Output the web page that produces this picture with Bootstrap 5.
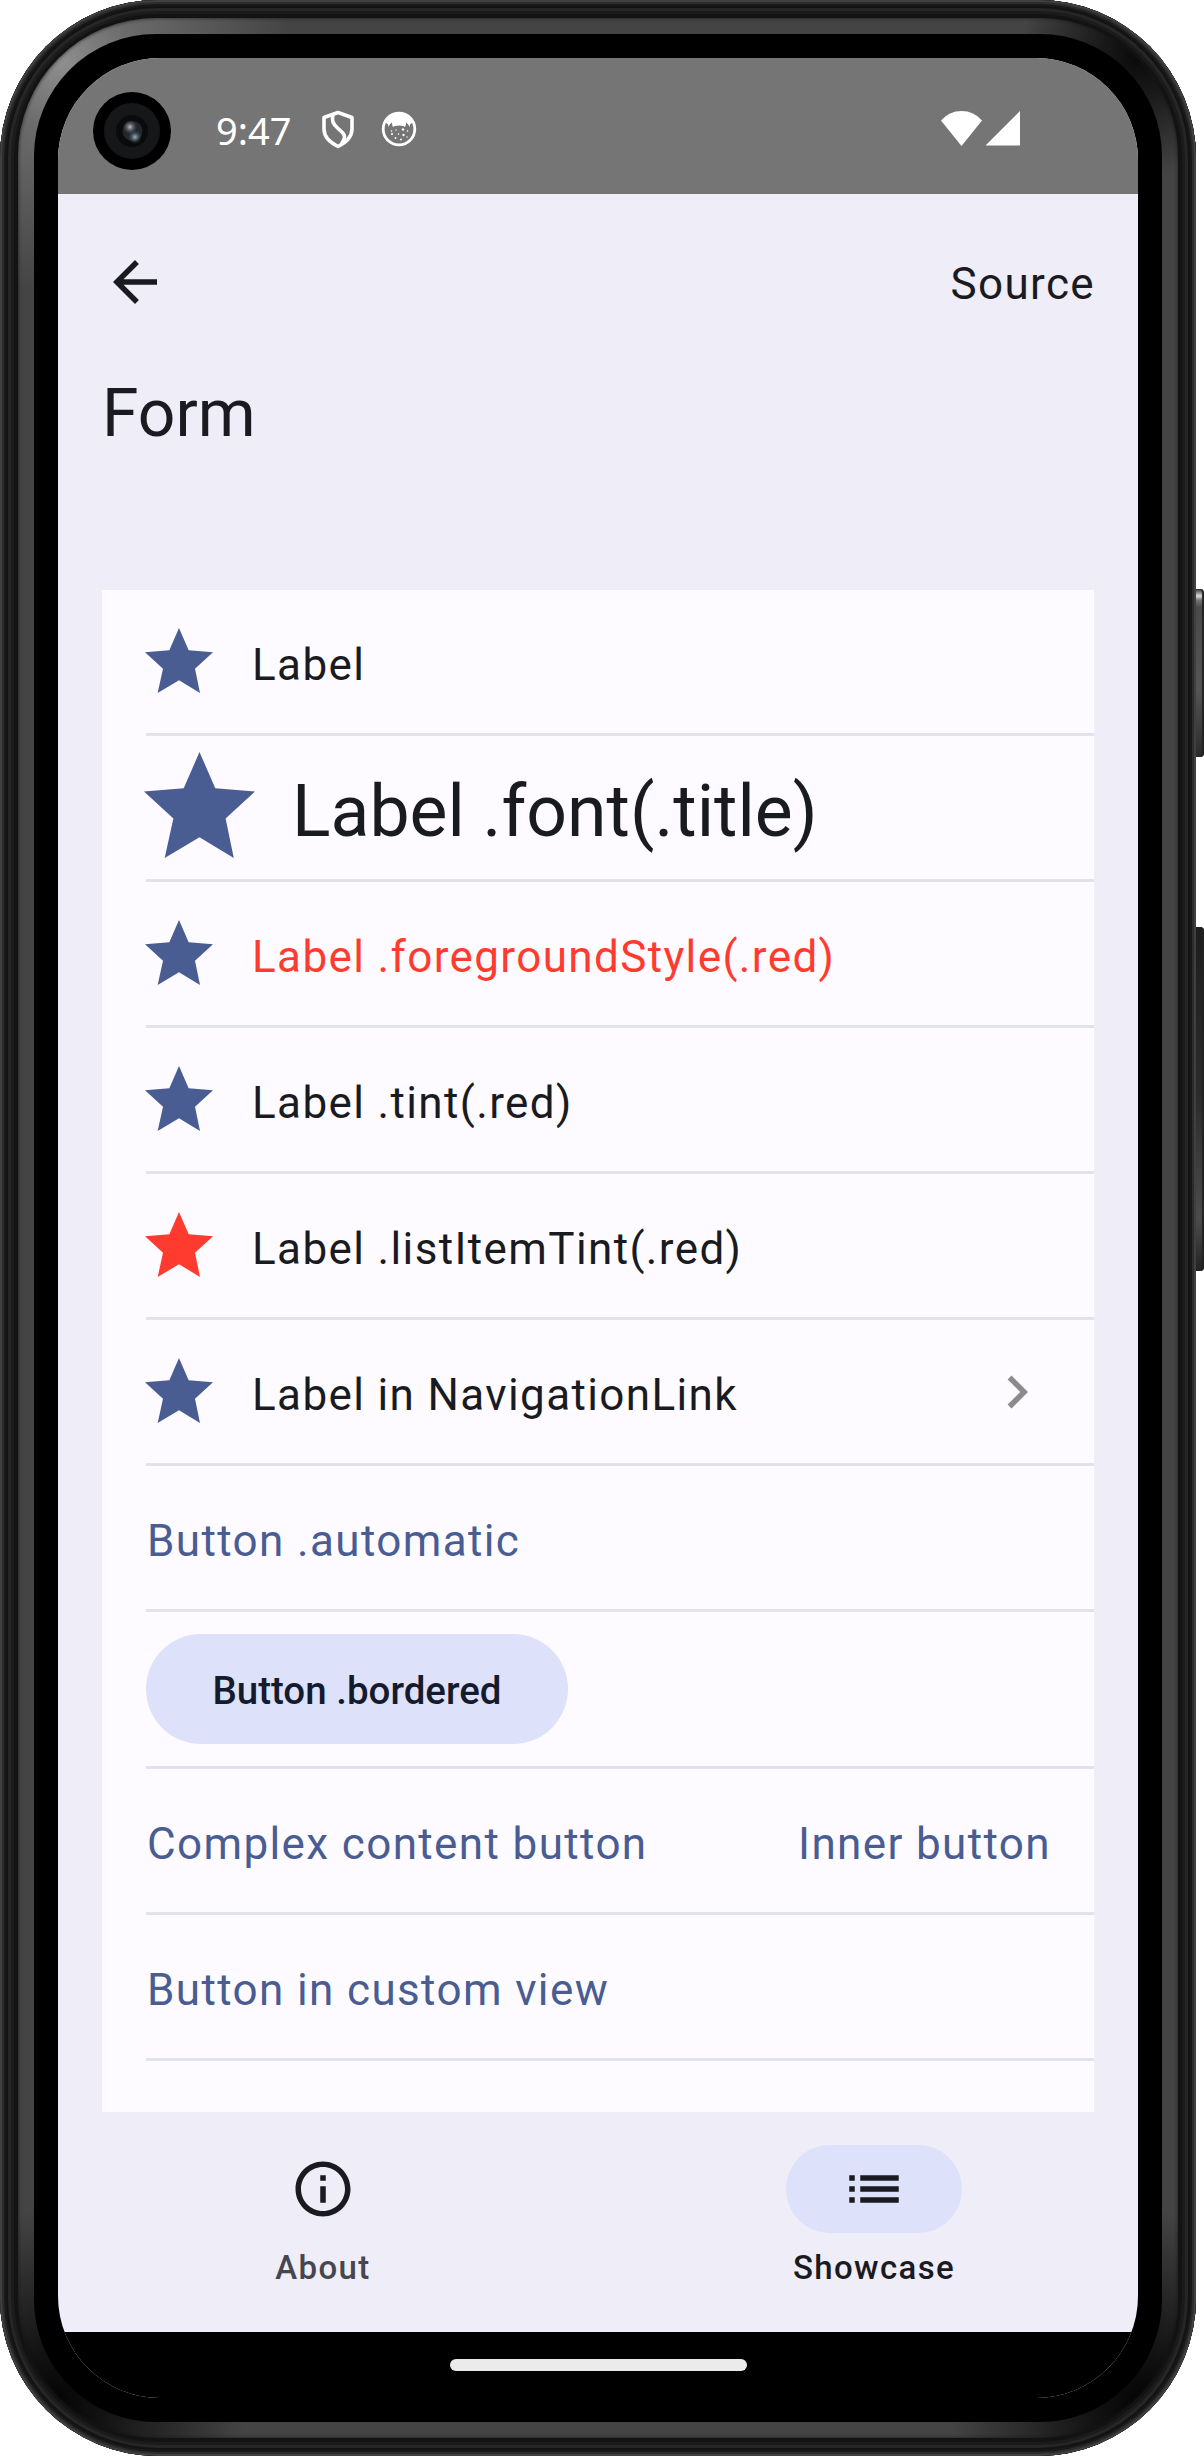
<!DOCTYPE html>
<html lang="en">
<head>
<meta charset="utf-8">
<meta name="viewport" content="width=device-width, initial-scale=1">
<title>Form</title>
<link href="https://cdn.jsdelivr.net/npm/bootstrap@5.3.0/dist/css/bootstrap.min.css" rel="stylesheet">
<style>
  body { font-family: Roboto, "Noto Sans", sans-serif; font-size: 44px; line-height: 66px; letter-spacing: 1.375px; color: #1a1b21; background: #fff; }
  svg { display: block; flex: none; }
  .stage { width: 1204px; height: 2456px; overflow: hidden; }
  /* phone shell, from the outside in */
  .shell { width: 1196px; height: 2456px; padding: 18px; border-radius: 158px; background: #131313;
    box-shadow: inset 0 0 0 2px #404040, inset 0 0 0 4px #2c2c2c, inset 0 0 0 6px #191919, inset 0 0 0 8px #131313, inset 0 0 0 11px #262626, inset 0 0 0 14px #1b1b1b; }
  .rim { padding: 16px; border-radius: 138px;
    background:
      radial-gradient(circle at 45px 45px, #8e8e8e 0, rgba(120,120,120,.75) 70px, rgba(80,80,80,0) 230px),
      radial-gradient(circle at calc(100% - 38px) 38px, #0a0a0a 0, rgba(15,15,15,.8) 40px, rgba(40,40,40,0) 120px),
      radial-gradient(circle at 38px calc(100% - 38px), #050505 0, rgba(10,10,10,.85) 50px, rgba(40,40,40,0) 190px),
      radial-gradient(circle at calc(100% - 38px) calc(100% - 38px), #050505 0, rgba(10,10,10,.85) 50px, rgba(40,40,40,0) 190px),
      #444;
    box-shadow: inset 0 0 3px 1px rgba(20,20,20,.5); }
  .bezel { padding: 24px; border-radius: 122px; background: #000; }
  .display-area { width: 1080px; height: 2340px; border-radius: 102px; background: #efedf7; }
  .side-key { left: 1196px; width: 8px; border-radius: 0 4px 4px 0; }
  .key-power { top: 589px; height: 168px; background: linear-gradient(#333 0, #ddd 7px, #777 11px, #4a4a4a 18px, #555 60%, #2a2a2a); box-shadow: inset -2px 0 1px #222; }
  .key-volume { top: 927px; height: 344px; background: linear-gradient(#1e1e1e, #2b2c2d 50%, #4c4c4c 85%, #222); box-shadow: inset -2px 0 1px #222; }
  .status-strip { height: 136px; background: #757575; color: #fff; padding: 5px 117px 0 35px; }
  .camera { margin-top: 5px; }
  .clock { font-family: "Noto Sans", sans-serif; font-size: 38px; line-height: 52px; letter-spacing: 0; margin: 2px 30px 0 45px; }
  .shield { margin: 1px 26px 0 0; }
  .toolbar { height: 176px; padding: 4px 43px 0 44px; }
  .toolbar svg { margin-top: -4px; }
  .heading { font-size: 66px; line-height: 88px; letter-spacing: 0; margin: 0 44px; height: 220px; }
  .form-list { margin: 0 44px; height: 1522px; background: #fdfbff; --bs-list-group-bg: transparent; border-radius: 0; }
  .form-row { margin-left: 44px; height: 146px; padding: 0 44px 0 0; border: 0; border-bottom: 3px solid #e1e2ec; border-radius: 0; background: transparent; color: inherit; }
  .form-row > .txt { padding: 6px 0 0 1px; margin-right: -1px; white-space: nowrap; }
  .star { width: 68px; height: 65px; margin: 0 38px 3px -1px; fill: #495d92; }
  .row-title { font-size: 71.5px; letter-spacing: 0; }
  .row-title > .txt { padding-top: 9px; }
  .row-title .star { width: 111px; height: 106px; margin: 0 36px 5px -2px; }
  .txt-red { color: #ff3b30; }
  .star-red { fill: #ff3b30; }
  .txt-tint { color: #495d92; }
  .row-tall { height: 157px; }
  .btn-tonal { width: 422px; height: 110px; padding: 2px 0 0; border: 0; font-size: 38.5px; line-height: 55px; font-weight: 500; letter-spacing: 0; background: #dde1f9; color: #151b2c; }
  .tab-strip { height: 220px; gap: 22px; padding-top: 33px; font-size: 33px; line-height: 44px; font-weight: 500; color: #45464f; }
  .tab-pill { width: 176px; height: 88px; color: #1a1b21; }
  .tab-item.active { color: #1a1b21; }
  .tab-item.active .tab-pill { background: #dde1f9; }
  .tab-text { margin-top: 13px; padding-left: 1px; }
  .gesture-strip { height: 66px; background: #000; }
  .handle { width: 297px; height: 12px; background: #ebebeb; }
</style>
<script src="https://cdn.jsdelivr.net/npm/bootstrap@5.3.0/dist/js/bootstrap.bundle.min.js"></script>
</head>
<body>
<svg width="0" height="0" class="position-absolute" aria-hidden="true">
  <symbol id="star" viewBox="195 805 204 193" preserveAspectRatio="none"><path d="M297 805L326 871L399 877L345 926L360 998L297 960L233 998L249 926L195 877L268 871Z"/></symbol>
</svg>
<div class="stage position-relative">
  <div class="shell">
    <div class="rim">
      <div class="bezel">
        <div class="display-area d-flex flex-column overflow-hidden">

          <div class="status-strip d-flex align-items-center">
            <svg class="camera" width="78" height="78" viewBox="0 0 78 78">
              <defs>
                <radialGradient id="g1"><stop offset="0" stop-color="#bcc0c6"/><stop offset="1" stop-color="#555960" stop-opacity="0"/></radialGradient>
                <radialGradient id="g2"><stop offset="0" stop-color="#9db4bd"/><stop offset="1" stop-color="#39464d" stop-opacity="0"/></radialGradient>
              </defs>
              <circle cx="39" cy="39" r="39" fill="#000"/><circle cx="39" cy="39" r="28" fill="#161718"/>
              <circle cx="39" cy="39" r="16" fill="#0a0b0d"/><circle cx="39.500" cy="39" r="10" fill="#22272d"/>
              <circle cx="37" cy="35" r="7" fill="url(#g1)"/><circle cx="42" cy="45" r="7" fill="url(#g2)"/>
            </svg>
            <div class="clock">9:47</div>
            <svg class="shield" width="34" height="40" viewBox="0 0 34 40" fill="none" stroke="#fff" stroke-width="3.600" stroke-linejoin="round">
              <path d="M17 3.500L31 8.500V20C31 28 25 33.500 17 37.500C9 33.500 3 28 3 20V8.500Z"/>
              <path d="M12 5.500C10.500 12 12 15 17 19.500C23.500 25 26 27 20.500 34.500"/>
            </svg>
            <svg width="36" height="36" viewBox="0 0 36 36">
              <circle cx="18" cy="18" r="15.800" fill="#757575" stroke="#fff" stroke-width="2.800"/>
              <path d="M4 11Q8 2.500 18 2.500T32 11L29 13.500L28.500 16Q27.500 12.500 25 11.500Q25 15.500 23.500 16Q23 14.500 18 14.500T12.500 16Q11 15.500 11 11.500Q8.500 12.500 7.500 16L7 13.500Z" fill="#fff"/>
              <g fill="#fff"><circle cx="10.500" cy="20" r=".8"/><circle cx="22" cy="18.500" r="1.200"/><circle cx="11" cy="23" r="1.100"/><circle cx="15" cy="19" r=".7"/><circle cx="17.500" cy="23" r=".8"/><circle cx="26.500" cy="20" r=".8"/><circle cx="22.500" cy="24" r="1.200"/><circle cx="14.500" cy="27" r=".9"/><circle cx="20" cy="28.500" r=".9"/><circle cx="26" cy="26" r=".7"/></g>
            </svg>
            <svg class="ms-auto" width="80" height="35" viewBox="0 0 80 35" fill="#fff"><path d="M0 9.500Q8 0 20.500 0T41 9.500L20.500 35Z"/><path d="M79 0V34.500H44.500Z"/></svg>
          </div>

          <nav class="toolbar d-flex align-items-center justify-content-between">
            <svg width="66" height="66" viewBox="0 0 24 24" fill="#1a1b21"><path d="M20 11H7.830l5.590-5.590L12 4l-8 8 8 8 1.410-1.410L7.830 13H20v-2z"/></svg>
            <span>Source</span>
          </nav>
          <h1 class="heading fw-normal">Form</h1>

          <div class="form-list list-group overflow-hidden flex-shrink-0">
            <div class="form-row list-group-item d-flex align-items-center flex-shrink-0"><svg class="star"><use href="#star"/></svg><span class="txt">Label</span></div>
            <div class="form-row row-title list-group-item d-flex align-items-center flex-shrink-0"><svg class="star"><use href="#star"/></svg><span class="txt">Label .font(.title)</span></div>
            <div class="form-row list-group-item d-flex align-items-center flex-shrink-0"><svg class="star"><use href="#star"/></svg><span class="txt txt-red">Label .foregroundStyle(.red)</span></div>
            <div class="form-row list-group-item d-flex align-items-center flex-shrink-0"><svg class="star"><use href="#star"/></svg><span class="txt">Label .tint(.red)</span></div>
            <div class="form-row list-group-item d-flex align-items-center flex-shrink-0"><svg class="star star-red"><use href="#star"/></svg><span class="txt">Label .listItemTint(.red)</span></div>
            <div class="form-row list-group-item d-flex align-items-center flex-shrink-0"><svg class="star"><use href="#star"/></svg><span class="txt">Label in NavigationLink</span>
              <svg class="ms-auto" width="66" height="66" viewBox="0 0 24 24" fill="#8b8b8c"><path d="M10 6L8.590 7.410 13.170 12l-4.580 4.590L10 18l6-6z"/></svg></div>
            <div class="form-row list-group-item d-flex align-items-center flex-shrink-0"><span class="txt txt-tint">Button .automatic</span></div>
            <div class="form-row row-tall list-group-item d-flex align-items-center flex-shrink-0"><button type="button" class="btn btn-tonal rounded-pill">Button .bordered</button></div>
            <div class="form-row list-group-item d-flex align-items-center justify-content-between flex-shrink-0"><span class="txt txt-tint">Complex content button</span><span class="txt txt-tint">Inner button</span></div>
            <div class="form-row list-group-item d-flex align-items-center flex-shrink-0"><span class="txt txt-tint">Button in custom view</span></div>
          </div>

          <div class="tab-strip d-flex">
            <div class="tab-item d-flex flex-column align-items-center flex-fill w-50">
              <div class="tab-pill rounded-pill d-flex align-items-center justify-content-center">
                <svg width="66" height="66" viewBox="0 0 24 24" fill="currentColor"><path d="M11 7h2v2h-2zm0 4h2v6h-2zm1-9C6.480 2 2 6.480 2 12s4.480 10 10 10 10-4.480 10-10S17.520 2 12 2zm0 18c-4.410 0-8-3.590-8-8s3.590-8 8-8 8 3.590 8 8-3.590 8-8 8z"/></svg>
              </div>
              <div class="tab-text">About</div>
            </div>
            <div class="tab-item active d-flex flex-column align-items-center flex-fill w-50">
              <div class="tab-pill rounded-pill d-flex align-items-center justify-content-center">
                <svg width="66" height="66" viewBox="0 0 24 24" fill="currentColor"><path d="M3 13h2v-2H3v2zm0 4h2v-2H3v2zm0-8h2V7H3v2zm4 4h14v-2H7v2zm0 4h14v-2H7v2zM7 7v2h14V7H7z"/></svg>
              </div>
              <div class="tab-text">Showcase</div>
            </div>
          </div>

          <div class="gesture-strip d-flex align-items-center justify-content-center flex-shrink-0"><div class="handle rounded-pill"></div></div>
        </div>
      </div>
    </div>
  </div>
  <div class="side-key key-power position-absolute"></div>
  <div class="side-key key-volume position-absolute"></div>
</div>
</body>
</html>
